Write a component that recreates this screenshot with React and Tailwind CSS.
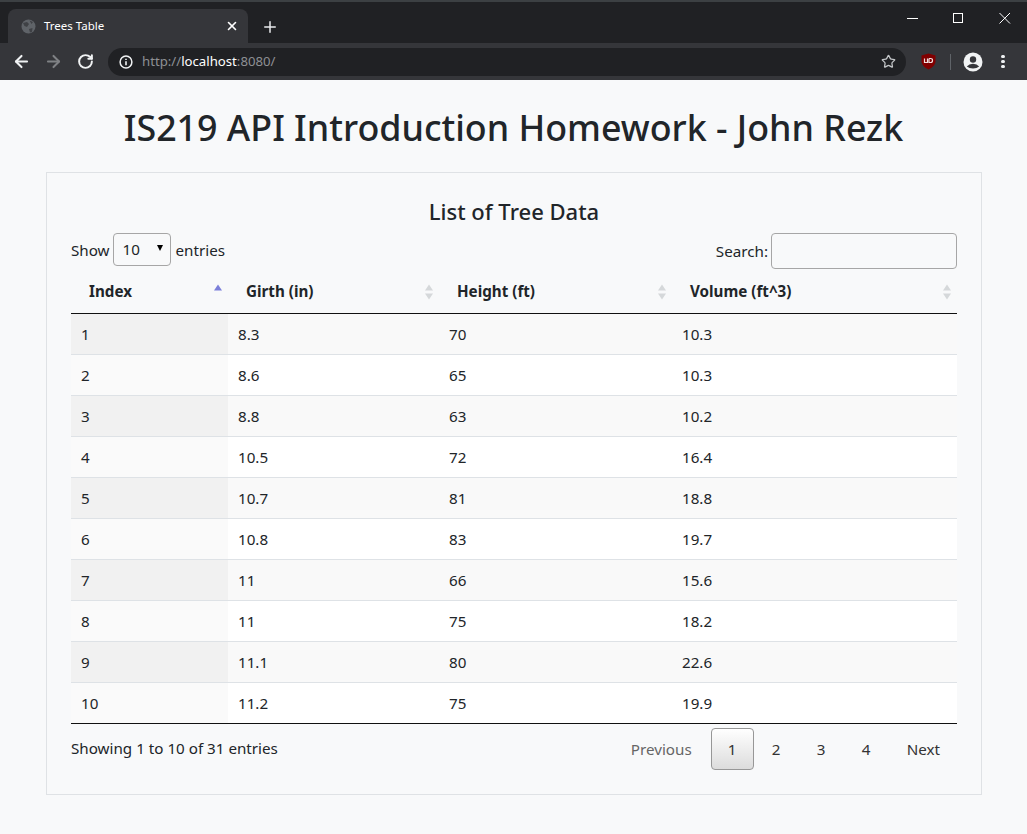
import { Star, ArrowLeft, ArrowRight, RotateCw, Plus, X } from 'lucide-react';

const rows = [
  [1, '8.3', 70, '10.3'],
  [2, '8.6', 65, '10.3'],
  [3, '8.8', 63, '10.2'],
  [4, '10.5', 72, '16.4'],
  [5, '10.7', 81, '18.8'],
  [6, '10.8', 83, '19.7'],
  [7, '11', 66, '15.6'],
  [8, '11', 75, '18.2'],
  [9, '11.1', 80, '22.6'],
  [10, '11.2', 75, '19.9'],
];

function SortArrows({ active }) {
  return (
    <svg width="10" height="17" viewBox="0 0 10 17" className="absolute right-[5px] top-[15px]">
      <path d="M5 0.5 L9 6.5 L1 6.5 Z" fill={active ? '#7b7fd9' : '#d5d8da'} />
      {!active && <path d="M5 15.5 L9 9.5 L1 9.5 Z" fill="#d5d8da" />}
    </svg>
  );
}

function Header({ label, width, active }) {
  return (
    <th className={`relative ${width} h-[44px] pl-[18px] pt-[2px] text-left font-bold text-[#212529]`}>
      {label}
      <SortArrows active={active} />
    </th>
  );
}

function BrowserBar() {
  return (
    <div className="h-[80px] bg-[#202124] border-t-[2px] border-[#3c4043]">
      <div className="flex h-[41px] items-end">
        <div className="ml-[8px] flex h-[34px] w-[240px] items-center rounded-t-lg bg-[#35363a] pl-[13px] pr-[8px]">
          <svg width="15" height="15" viewBox="0 0 15 15">
            <circle cx="7.5" cy="7.5" r="7" fill="#5f6368" />
            <path d="M2 4 L6 3 L8 5 L6 8 L3.5 7 Z M8 10 L11.5 9 L11 13 L9 13.5 Z M8.5 1.5 L12 3 L10.5 5 Z" fill="#3f4145" />
          </svg>
          <span className="ml-[8px] flex-1 text-[11.5px] text-white">Trees Table</span>
          <X size={14} strokeWidth={2.8} className="mr-[1px] text-white" />
        </div>
        <Plus size={18} strokeWidth={2} className="mb-[7px] ml-[13px] text-[#e8eaed]" />
        <svg width="104" height="12" viewBox="0 0 104 12" className="mb-[19px] ml-auto mr-[16px] text-white" fill="none" stroke="currentColor">
          <path d="M0 6.5 H11" />
          <rect x="46.5" y="1.5" width="9" height="9" />
          <path d="M92.5 1 L103 11.5 M103 1 L92.5 11.5" />
        </svg>
      </div>
      <div className="flex h-[37px] items-center bg-[#35363a]">
        <ArrowLeft size={19} strokeWidth={2.6} className="ml-[12px] text-[#f1f3f4]" />
        <ArrowRight size={19} strokeWidth={2.6} className="ml-[13px] text-[#7f8184]" />
        <RotateCw size={17} strokeWidth={2.8} className="ml-[14px] text-[#f1f3f4]" />
        <div className="ml-[14px] flex h-[28px] w-[798px] items-center rounded-full bg-[#202124] pl-[11px] pr-[10px]">
          <svg width="14" height="14" viewBox="0 0 14 14" className="text-[#f1f3f4]">
            <circle cx="7" cy="7" r="5.9" fill="none" stroke="currentColor" strokeWidth="1.5" />
            <path d="M7 6.2 V10.2 M7 3.8 V5" stroke="currentColor" strokeWidth="1.6" />
          </svg>
          <span className="ml-[9px] flex-1 text-[13.2px] text-[#8e9094]">
            http://<span className="text-white">localhost</span>:8080/
          </span>
          <Star size={15} strokeWidth={2} className="text-[#c4c7c9]" />
        </div>
        <svg width="15" height="17" viewBox="0 0 15 17" className="ml-[15px]">
          <path d="M7.5 0.5 L14.5 2.5 L14.5 9 Q13.5 14 7.5 16.5 Q1.5 14 0.5 9 L0.5 2.5 Z" fill="#800000" />
          <path d="M3.5 5.5 V9.5 H6.5 V5.5 M8 5.5 V9.5 H9.7 Q11.5 9.5 11.5 7.5 Q11.5 5.5 9.7 5.5 H8" fill="none" stroke="#f2dede" strokeWidth="1.2" />
        </svg>
        <div className="ml-[14px] h-[16px] w-px bg-[#5f6368]" />
        <svg width="20" height="20" viewBox="0 0 20 20" className="ml-[12px]">
          <circle cx="10" cy="10" r="9.5" fill="#f1f3f4" />
          <circle cx="10" cy="7.5" r="3.2" fill="#35363a" />
          <path d="M3.8 14.5 Q6 11.8 10 11.8 Q14 11.8 16.2 14.5 Q13.8 16.5 10 16.5 Q6.2 16.5 3.8 14.5 Z" fill="#35363a" />
        </svg>
        <div className="ml-[18px] flex flex-col gap-[1.5px]">
          <span className="h-[3.5px] w-[3.5px] rounded-full bg-[#f1f3f4]" />
          <span className="h-[3.5px] w-[3.5px] rounded-full bg-[#f1f3f4]" />
          <span className="h-[3.5px] w-[3.5px] rounded-full bg-[#f1f3f4]" />
        </div>
      </div>
    </div>
  );
}

export default function App() {
  return (
    <div className="min-h-[834px] bg-[#f8f9fa] font-['Noto_Sans','Open_Sans',sans-serif] text-[15.2px] text-[#212529]">
      <BrowserBar />
      <h1 className="mt-[22px] h-[51px] text-center text-[35.8px] leading-[50px] font-medium">
        IS219 API Introduction Homework - John Rezk
      </h1>
      <div className="ml-[46px] mt-[19px] h-[623px] w-[936px] border border-[#dfe2e5] px-[24px] pt-[23px]">
        <h2 className="h-[30px] text-center text-[22px] leading-[30px] font-medium">List of Tree Data</h2>
        <div className="mt-[7px] flex h-[36px] items-start justify-between">
          <div className="flex items-center">
            <span className="pt-[2px]">Show</span>
            <div className="relative ml-[3px] mr-[5px] flex h-[33px] w-[58px] items-center rounded border border-[#a6a6a6] pl-[9px]">
              10
              <span className="absolute right-[7px] top-[11px] h-0 w-0 border-x-[3.5px] border-t-[6px] border-x-transparent border-t-black" />
            </div>
            <span className="pt-[2px]">entries</span>
          </div>
          <div className="flex items-center">
            Search:
            <input className="ml-[3px] h-[36px] w-[186px] rounded border border-[#a6a6a6] bg-transparent" />
          </div>
        </div>
        <table className="w-[886px] table-fixed border-collapse">
          <thead>
            <tr className="border-b border-[#111]">
              <Header label="Index" width="w-[157px]" active />
              <Header label="Girth (in)" width="w-[211px]" />
              <Header label="Height (ft)" width="w-[233px]" />
              <Header label="Volume (ft^3)" width="w-[285px]" />
            </tr>
          </thead>
          <tbody>
            {rows.map((r, i) => (
              <tr key={r[0]} className={`h-[41px] ${i < 9 ? 'border-b border-[#dee2e6]' : ''} ${i % 2 === 0 ? 'bg-[#f9f9f9]' : 'bg-white'}`}>
                <td className={`pl-[10px] pt-[2px] ${i % 2 === 0 ? 'bg-[#f1f1f1]' : 'bg-[#fafafa]'}`}>{r[0]}</td>
                <td className="pl-[10px] pt-[2px]">{r[1]}</td>
                <td className="pl-[10px] pt-[2px]">{r[2]}</td>
                <td className="pl-[10px] pt-[2px]">{r[3]}</td>
              </tr>
            ))}
          </tbody>
        </table>
        <div className="flex items-start justify-between border-t border-[#111] pt-[4px]">
          <div className="mt-[9px]">Showing 1 to 10 of 31 entries</div>
          <div className="flex h-[42px] items-center">
            <span className="mr-[19px] text-[#666]">Previous</span>
            <span className="flex h-[42px] w-[43px] items-center justify-center rounded-sm border border-[#979797] bg-gradient-to-b from-white to-[#dcdcdc] text-[#333]">1</span>
            <span className="flex w-[45px] justify-center text-[#333]">2</span>
            <span className="flex w-[45px] justify-center text-[#333]">3</span>
            <span className="flex w-[45px] justify-center text-[#333]">4</span>
            <span className="ml-[18px] mr-[17px] text-[#333]">Next</span>
          </div>
        </div>
      </div>
    </div>
  );
}
